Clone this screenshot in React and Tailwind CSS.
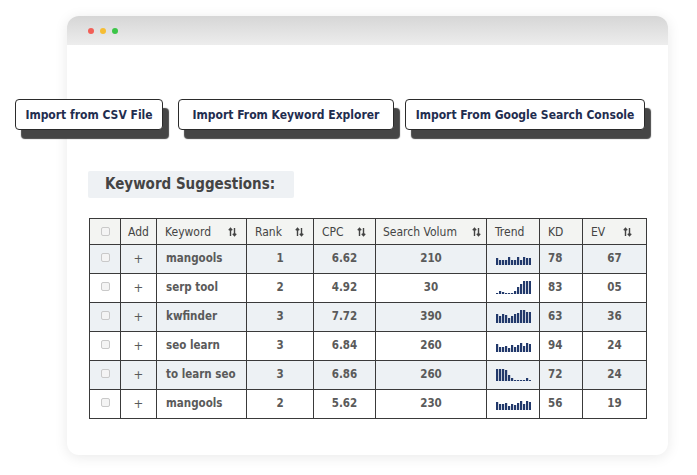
// Keyword import card with suggestions table
const rows = [
  { kw: 'mangools', rank: 1, cpc: '6.62', vol: 210, kd: 78, ev: '67', trend: [7, 5, 5, 5, 8, 5, 5, 8, 5, 8, 7, 7] },
  { kw: 'serp tool', rank: 2, cpc: '4.92', vol: 30, kd: 83, ev: '05', trend: [1, 3, 2, 1, 1, 1, 3, 7, 10, 13, 13, 13] },
  { kw: 'kwfinder', rank: 3, cpc: '7.72', vol: 390, kd: 63, ev: '36', trend: [9, 7, 9, 8, 5, 7, 9, 10, 13, 13, 11, 11] },
  { kw: 'seo learn', rank: 3, cpc: '6.84', vol: 260, kd: 94, ev: '24', trend: [8, 5, 5, 6, 4, 7, 5, 7, 9, 6, 9, 8] },
  { kw: 'to learn seo', rank: 3, cpc: '6.86', vol: 260, kd: 72, ev: '24', trend: [12, 12, 12, 11, 6, 3, 1, 1, 1, 1, 3, 1] },
  { kw: 'mangools', rank: 2, cpc: '5.62', vol: 230, kd: 56, ev: '19', trend: [8, 6, 6, 7, 4, 6, 5, 7, 9, 6, 9, 8] },
];

function Trend({ data }) {
  return (
    <svg width="35" height="13" viewBox="0 0 35 13" className="inline-block align-middle">
      {data.map((h, i) => (
        <rect key={i} x={i * 3} y={13 - h} width="2.2" height={h} fill="#22396b" />
      ))}
    </svg>
  );
}

function Sort() {
  return (
    <svg width="9" height="10" viewBox="0 0 9 10" className="inline-block" fill="none" stroke="#444" strokeWidth="1.4">
      <path d="M2.5 9V1.5M0.8 3.2L2.5 1.3L4.2 3.2" />
      <path d="M6.5 1V8.5M4.8 6.8L6.5 8.7L8.2 6.8" />
    </svg>
  );
}

function Box() {
  return <span className="inline-block w-[9px] h-[9px] rounded-[2px] border border-[#c9c9c9] bg-[#f4f4f4]" />;
}

function ImportButton({ label, className }) {
  return (
    <button className={`h-[31px] bg-white border border-[#2b2b2b] rounded-[4px] shadow-[6px_9px_1px_#454545] text-[12px] font-bold text-[#1f2d4f] ${className}`}>
      {label}
    </button>
  );
}

export default function App() {
  const th = 'border border-[#3a3a3a] px-2 text-left font-normal';
  const td = 'border border-[#3a3a3a] text-center';
  return (
    <div className="w-[697px] h-[475px] bg-white overflow-hidden pt-[16px] pl-[67px]" style={{ fontFamily: '"DejaVu Sans Condensed", "DejaVu Sans", sans-serif' }}>
      <div className="w-[601px] h-[439px] rounded-[12px] bg-white shadow-[0_2px_14px_rgba(0,0,0,0.09)]">
        <div className="h-[29px] rounded-t-[12px] bg-gradient-to-b from-[#d6d6d6] to-[#ededed] flex items-center gap-[6px] pl-[21px]">
          <span className="w-[6px] h-[6px] rounded-full bg-[#f25f57]" />
          <span className="w-[6px] h-[6px] rounded-full bg-[#f6bd33]" />
          <span className="w-[6px] h-[6px] rounded-full bg-[#3cc548]" />
        </div>

        <div className="flex items-start mt-[54px] -ml-[52px]">
          <ImportButton label="Import from CSV File" className="w-[148px]" />
          <ImportButton label="Import From Keyword Explorer" className="w-[216px] ml-[15px]" />
          <ImportButton label="Import From Google Search Console" className="w-[240px] ml-[11px]" />
        </div>

        <div className="ml-[21px] mt-[41px] w-[206px] h-[27px] bg-[#eef1f4] rounded-[2px] flex items-center pl-[17px] text-[15px] text-[#444] font-bold">
          Keyword Suggestions:
        </div>

        <table className="ml-[22px] mt-[20px] w-[557px] border-collapse text-[11.5px] text-[#5a5a5a] table-fixed">
          <colgroup>
            <col className="w-[31px]" />
            <col className="w-[36px]" />
            <col className="w-[90px]" />
            <col className="w-[67px]" />
            <col className="w-[62px]" />
            <col className="w-[111px]" />
            <col className="w-[53px]" />
            <col className="w-[43px]" />
            <col className="w-[64px]" />
          </colgroup>
          <thead>
            <tr className="h-[26px] bg-[#f3f4f2] text-[12px] text-[#444]">
              <th className={`${td} font-normal`}><Box /></th>
              <th className={`${td} font-normal`}>Add</th>
              <th className={th}><span className="flex items-center justify-between pr-[1px]">Keyword <Sort /></span></th>
              <th className={th}><span className="flex items-center justify-between pr-[1px]">Rank <Sort /></span></th>
              <th className={th}><span className="flex items-center justify-between pr-[1px]">CPC <Sort /></span></th>
              <th className={`${th} pl-[7px] pr-[5px]`}><span className="flex items-center justify-between">Search Volum <Sort /></span></th>
              <th className={th}>Trend</th>
              <th className={th}>KD</th>
              <th className={th}><span className="flex items-center justify-between pr-[6px]">EV <Sort /></span></th>
            </tr>
          </thead>
          <tbody className="font-bold">
            {rows.map((r, i) => (
              <tr key={i} className={`h-[29px] ${i % 2 === 0 ? 'bg-[#edf1f4]' : 'bg-white'}`}>
                <td className={td}><Box /></td>
                <td className={`${td} font-normal text-[13px]`}>+</td>
                <td className="border border-[#3a3a3a] text-left px-[9px]">{r.kw}</td>
                <td className={td}>{r.rank}</td>
                <td className={td}>{r.cpc}</td>
                <td className={td}>{r.vol}</td>
                <td className={td}><Trend data={r.trend} /></td>
                <td className="border border-[#3a3a3a] text-left pl-[8px]">{r.kd}</td>
                <td className={td}>{r.ev}</td>
              </tr>
            ))}
          </tbody>
        </table>
      </div>
    </div>
  );
}
